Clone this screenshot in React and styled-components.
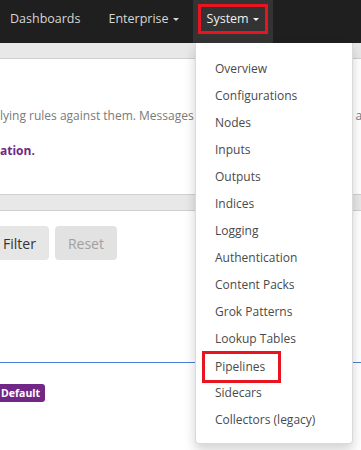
import React from "react";
import styled, { createGlobalStyle } from "styled-components";

const GlobalStyle = createGlobalStyle`
  html, body { margin: 0; padding: 0; background: #fff; }
  body { font-family: "Open Sans", "Noto Sans", sans-serif; overflow: hidden; }
`;

const Page = styled.div`
  position: relative;
  width: 361px;
  height: 450px;
  overflow: hidden;
  background: #fff;
`;

const Navbar = styled.nav`
  display: flex;
  height: 43px;
  background: #1f1f1f;
  margin-left: -4px;
`;

const NavItem = styled.div`
  display: flex;
  align-items: flex-start;
  box-sizing: border-box;
  height: 43px;
  padding: 9px 14px 0;
  font-size: 12.5px;
  line-height: 20px;
  color: ${(p) => (p.$active ? "#f0f0f0" : "#d6d6d6")};
  background: ${(p) => (p.$active ? "#333333" : "transparent")};
`;

const Marked = styled.span`
  display: inline-flex;
  align-items: center;
  gap: 4px;
  outline: ${(p) => (p.$marked ? "3px solid #e8141f" : "none")};
  outline-offset: ${(p) => (p.$marked ? "2px" : "0")};
  margin: ${(p) => (p.$marked ? "0 -4px" : "0")};
  padding: ${(p) => (p.$marked ? "0 4px" : "0")};
`;

const Caret = styled.span`
  display: inline-block;
  width: 0;
  height: 0;
  border-left: 3px solid transparent;
  border-right: 3px solid transparent;
  border-top: 3px solid currentColor;
  margin-top: 1px;
`;

const SubBar = styled.div`
  height: 15px;
  background: #e8e8e8;
  border-bottom: 1px solid #cfcfcf;
`;

const Content = styled.main`
  display: flex;
  flex-direction: column;
`;

const Description = styled.p`
  margin: 48px 0 0;
  font-size: 12px;
  line-height: 18px;
  color: #7a7a7a;
  white-space: nowrap;
`;

const Strong = styled.p`
  margin: 17px 0 0;
  font-size: 12px;
  line-height: 18px;
  font-weight: 700;
  color: #702785;
  white-space: nowrap;
`;

const TableBar = styled.div`
  margin-top: 34px;
  height: 15px;
  background: #e8e8e8;
  border-top: 1px solid #d0d0d0;
  border-bottom: 1px solid #d0d0d0;
`;

const ButtonRow = styled.div`
  display: flex;
  gap: 6px;
  margin-top: 15px;
  margin-left: -10px;
`;

const Button = styled.button`
  height: 34px;
  padding: 0 13px;
  border: none;
  border-radius: 4px;
  font-family: inherit;
  font-size: 14px;
  background: ${(p) => (p.$disabled ? "#e2e2e2" : "#e6e6e6")};
  color: ${(p) => (p.$disabled ? "#a0a0a0" : "#333")};
`;

const BlueRule = styled.div`
  margin-top: 102px;
  height: 0;
  border-top: 1px solid #4a7fd8;
`;

const BadgeRow = styled.div`
  margin-top: 21px;
  display: flex;
`;

const Badge = styled.span`
  display: inline-block;
  height: 18px;
  line-height: 18px;
  padding: 0 5px 0 7px;
  margin-left: -6px;
  border-radius: 3px;
  background: #702785;
  color: #fff;
  font-size: 10.5px;
  font-weight: 700;
`;

const Dropdown = styled.ul`
  position: absolute;
  top: 43px;
  left: 195px;
  width: 158px;
  box-sizing: border-box;
  margin: 0;
  padding: 11px 0;
  list-style: none;
  background: #fff;
  border: 1px solid rgba(0, 0, 0, 0.15);
  border-top: none;
  border-radius: 0 0 4px 4px;
  box-shadow: 0 6px 12px rgba(0, 0, 0, 0.175);
`;

const MenuItem = styled.li`
  height: 27px;
  line-height: 27px;
  padding-left: 19px;
  font-size: 12px;
  color: #4a4a4a;
  white-space: nowrap;
`;

const MenuLabel = styled.span`
  display: inline-block;
  line-height: 20px;
  padding: ${(p) => (p.$marked ? "6px 16px 6px 13px" : "0")};
  margin-left: ${(p) => (p.$marked ? "-13px" : "0")};
  outline: ${(p) => (p.$marked ? "3px solid #e8141f" : "none")};
  outline-offset: -3px;
  vertical-align: middle;
`;

const items = [
  "Overview",
  "Configurations",
  "Nodes",
  "Inputs",
  "Outputs",
  "Indices",
  "Logging",
  "Authentication",
  "Content Packs",
  "Grok Patterns",
  "Lookup Tables",
  "Pipelines",
  "Sidecars",
  "Collectors (legacy)",
];

export default function App() {
  return (
    <Page>
      <GlobalStyle />
      <Navbar>
        <NavItem>Dashboards</NavItem>
        <NavItem>
          <Marked>
            Enterprise <Caret />
          </Marked>
        </NavItem>
        <NavItem $active>
          <Marked $marked>
            System <Caret />
          </Marked>
        </NavItem>
      </Navbar>
      <SubBar />
      <Content>
        <Description>
          lying rules against them. Messages are processed in stages and are
        </Description>
        <Strong>ation.</Strong>
        <TableBar />
        <ButtonRow>
          <Button>Filter</Button>
          <Button $disabled>Reset</Button>
        </ButtonRow>
        <BlueRule />
        <BadgeRow>
          <Badge>Default</Badge>
        </BadgeRow>
      </Content>
      <Dropdown>
        {items.map((it) => (
          <MenuItem key={it}>
            <MenuLabel $marked={it === "Pipelines"}>{it}</MenuLabel>
          </MenuItem>
        ))}
      </Dropdown>
    </Page>
  );
}
